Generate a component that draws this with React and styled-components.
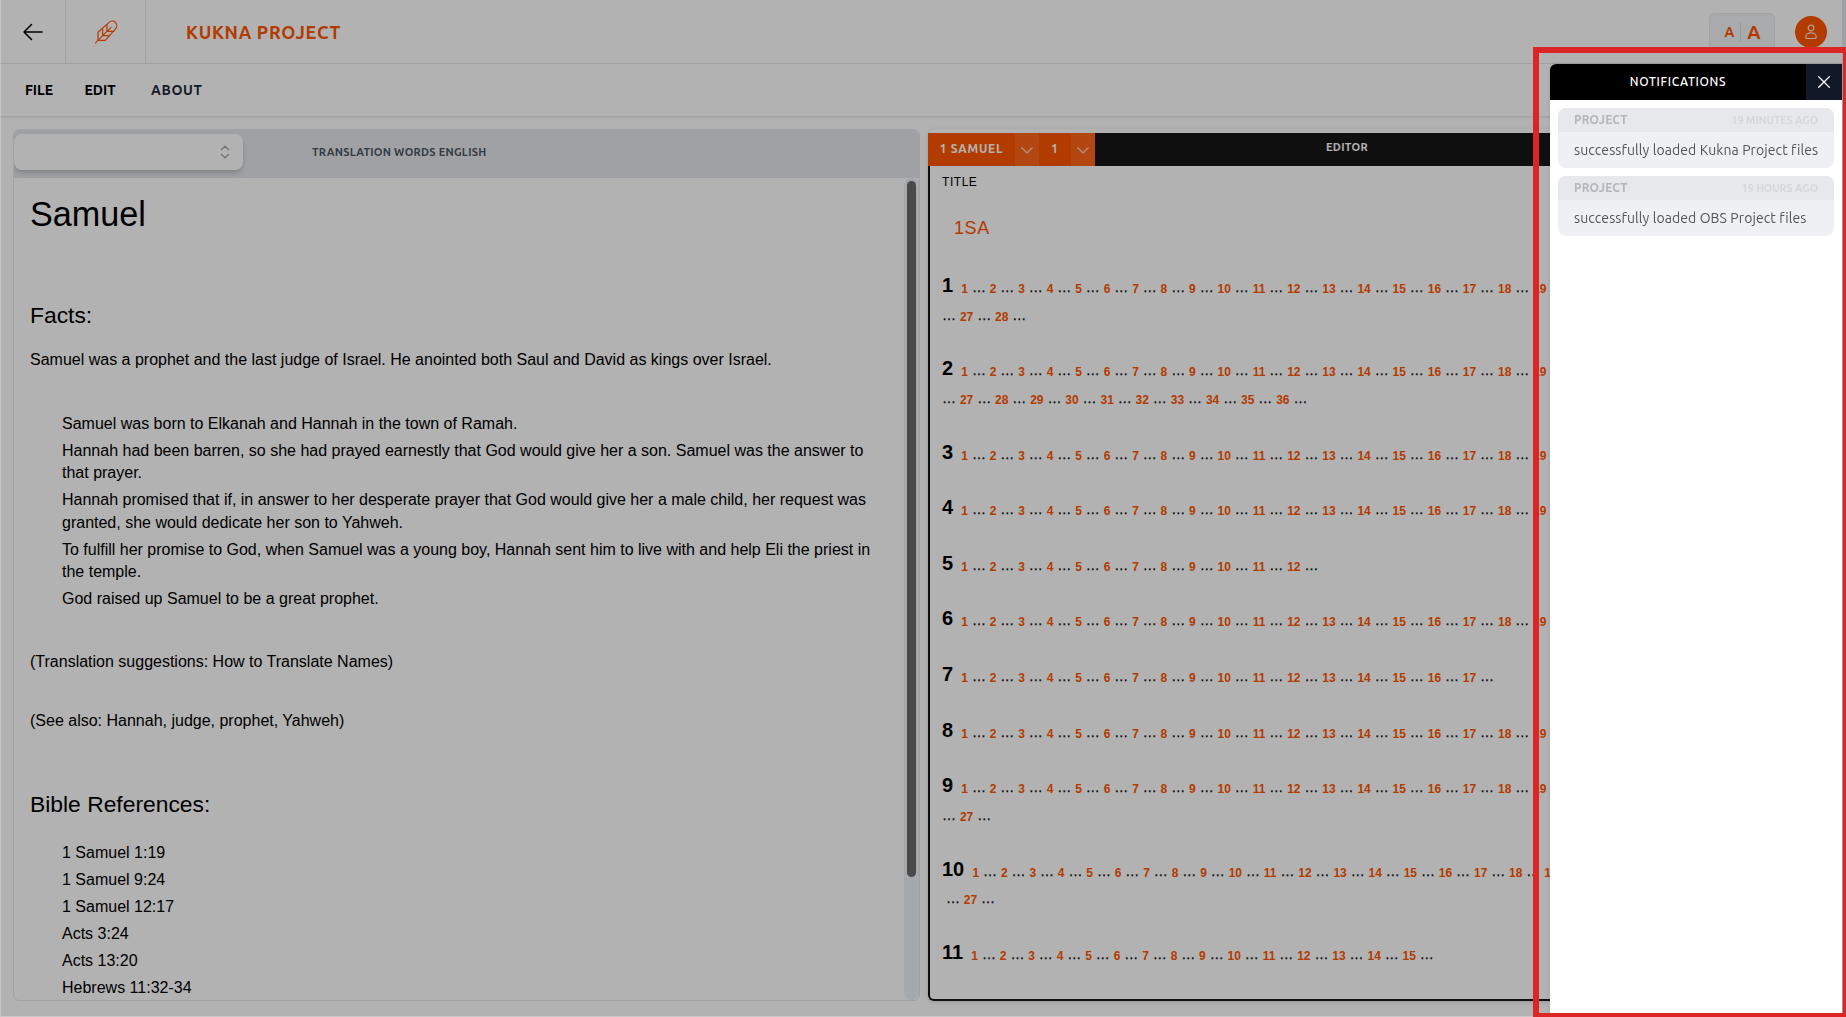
import React from "react";
import styled, { createGlobalStyle } from "styled-components";

const ui = `"Ubuntu", "Noto Sans", "Open Sans", sans-serif`;
const doc = `"Liberation Sans", Arial, sans-serif`;
const orange = "#ff5500";
const line = "#e5e7eb";

const GlobalStyle = createGlobalStyle`
  * { box-sizing: border-box; }
  html, body { margin: 0; padding: 0; overflow: hidden; }
  body { font-family: ${ui}; color: #000; background: #fff; }
  h1, h2, p, ul { margin: 0; padding: 0; font-weight: 400; }
  svg { display: block; }
`;

const Page = styled.div`
  width: 1846px;
  height: 1017px;
  display: flex;
  flex-direction: column;
  overflow: hidden;
  border-right: 4px solid ${line};
`;

const TopBar = styled.header`
  height: 64px;
  flex: none;
  display: flex;
  align-items: stretch;
  border-bottom: 1px solid ${line};
`;

const IconCell = styled.div`
  width: ${(p) => p.$width}px;
  display: flex;
  align-items: center;
  justify-content: center;
  border-right: 1px solid ${line};
`;

const ProjectName = styled.div`
  display: flex;
  align-items: center;
  margin-left: 40px;
  color: ${orange};
  font-size: 18px;
  font-weight: 700;
  letter-spacing: 0.66px;
`;

const TopTools = styled.div`
  margin-left: auto;
  padding: 0 15px 0 0;
  display: flex;
  align-items: center;
  gap: 20px;
`;

const FontSizer = styled.div`
  width: 66px;
  height: 38px;
  display: flex;
  align-items: center;
  justify-content: center;
  gap: 6px;
  padding-left: 1px;
  border: 1px solid ${line};
  border-radius: 6px;
  background: #f3f4f6;
  color: ${orange};
  font-weight: 700;
`;

const SizeLetter = styled.span`
  font-size: ${(p) => p.$size}px;
  line-height: 20px;
`;

const SizeDivider = styled.span`
  width: 1px;
  height: 20px;
  background: #dcdee2;
`;

const Avatar = styled.div`
  width: 32px;
  height: 32px;
  border-radius: 50%;
  background: ${orange};
  display: flex;
  align-items: center;
  justify-content: center;
`;

const MenuBar = styled.nav`
  height: 53px;
  flex: none;
  display: flex;
  align-items: center;
  padding: 0 0 1px 25px;
  border-bottom: 1px solid ${line};
  box-shadow: 0 1px 2px rgba(0, 0, 0, 0.08);
  font-size: 14px;
  font-weight: 600;
`;

const MenuItem = styled.span`
  width: ${(p) => p.$width}px;
  letter-spacing: ${(p) => p.$track || 0}px;
  color: ${(p) => p.$color || "#000"};
`;

const Workspace = styled.main`
  flex: 1;
  min-height: 0;
  display: flex;
  gap: 8px;
  padding: 12px 6px 16px 13px;
`;

const ResourcePanel = styled.section`
  width: 907px;
  flex: none;
  display: flex;
  flex-direction: column;
  border: 1px solid ${line};
  border-radius: 6px;
  overflow: hidden;
`;

const ResourceHead = styled.div`
  height: 48px;
  flex: none;
  display: flex;
  align-items: center;
  background: ${line};
`;

const Picker = styled.div`
  width: 229px;
  height: 36px;
  margin-top: -4px;
  padding-right: 10px;
  display: flex;
  align-items: center;
  justify-content: flex-end;
  background: #fff;
  border-radius: 8px;
  box-shadow: 0 4px 6px -1px rgba(0, 0, 0, 0.15), 0 2px 4px -1px rgba(0, 0, 0, 0.1);
`;

const ResourceTitle = styled.span`
  margin-left: 69px;
  margin-top: -4px;
  font-size: 11px;
  font-weight: 700;
  letter-spacing: 0.26px;
  color: #4b5563;
`;

const ResourceBody = styled.div`
  flex: 1;
  min-height: 0;
  display: flex;
`;

const Article = styled.article`
  flex: 1;
  min-width: 0;
  padding: 16px 19px 0 16px;
  overflow: hidden;
  font-family: ${doc};
  font-size: 16px;
  line-height: 22.4px;
`;

const Heading = styled.h1`
  font-size: 34.2px;
  line-height: 40px;
`;

const SubHeading = styled.h2`
  margin-top: ${(p) => p.$top}px;
  font-size: 22.85px;
  line-height: 28px;
`;

const Para = styled.p`
  margin-top: ${(p) => p.$top}px;
`;

const List = styled.ul`
  list-style: none;
  margin-top: ${(p) => p.$top}px;
  padding-left: 32px;
  display: flex;
  flex-direction: column;
  gap: 4.6px;
`;

const ScrollTrack = styled.div`
  width: 15px;
  padding: 3px;
  border-radius: 8px;
  background: #edf2f7;
`;

const ScrollThumb = styled.div`
  width: 9px;
  height: 696px;
  border-radius: 5px;
  background: #6b6b6b;
`;

const EditorPanel = styled.section`
  flex: 1;
  min-width: 0;
  display: flex;
  flex-direction: column;
  padding-top: 4px;
  border-radius: 6px;
  box-shadow: 0 1px 4px rgba(0, 0, 0, 0.15);
`;

const EditorHead = styled.div`
  height: 33px;
  flex: none;
  display: flex;
  background: #161616;
  color: #fff;
  font-weight: 700;
`;

const BookCell = styled.div`
  width: ${(p) => p.$width}px;
  display: flex;
  align-items: center;
  justify-content: center;
  padding-bottom: 2px;
  background: ${orange};
  font-size: 12px;
  letter-spacing: 0.75px;
`;

const ArrowCell = styled.div`
  width: 24px;
  display: flex;
  align-items: center;
  justify-content: center;
  background: #ff661a;
`;

const EditorTitle = styled.div`
  margin-left: 231px;
  line-height: 28px;
  font-size: 11px;
  letter-spacing: 0.3px;
`;

const EditorBody = styled.div`
  flex: 1;
  min-height: 0;
  overflow: hidden;
  padding-left: 12px;
  border: solid #161616;
  border-width: 0 2px 2px;
  border-radius: 0 0 6px 6px;
  font-family: ${doc};
  font-size: 14px;
  line-height: 27.75px;
  white-space: nowrap;
`;

const FieldLabel = styled.div`
  padding-top: 7px;
  font-size: 12px;
  line-height: 18px;
  letter-spacing: 0.55px;
`;

const BookCode = styled.div`
  margin: 24px 0 33px 12px;
  font-size: 18px;
  line-height: 26px;
  letter-spacing: 0.6px;
  color: ${orange};
`;

const Chapter = styled.p`
  margin-bottom: 27.85px;
`;

const ChapterNumber = styled.b`
  margin-right: 8.2px;
  font-size: 20px;
  line-height: 0;
`;

const VerseNumber = styled.b`
  font-size: 12px;
  line-height: 0;
  vertical-align: -1px;
  color: ${orange};
`;

const Gap = styled.span`
  -webkit-text-stroke: 0.25px #000;
`;

const Backdrop = styled.div`
  position: fixed;
  inset: 0 0 1px 1px;
  background: rgba(0, 0, 0, 0.3);
`;

const EdgeShade = styled.div`
  position: fixed;
  inset: 0;
  border: solid rgba(0, 0, 0, 0.22);
  border-width: 0 0 1px 1px;
`;

const Drawer = styled.aside`
  position: fixed;
  top: 64px;
  right: 4px;
  bottom: 0;
  width: 292px;
  background: #fff;
  border-top-left-radius: 6px;
  overflow: hidden;
  box-shadow: 0 0 4px rgba(0, 0, 0, 0.12);
`;

const DrawerHead = styled.div`
  height: 36px;
  display: flex;
  background: #000;
  color: #fff;
`;

const DrawerTitle = styled.div`
  flex: 1;
  text-align: center;
  font-size: 12px;
  font-weight: 500;
  line-height: 35px;
  letter-spacing: 0.65px;
`;

const CloseButton = styled.div`
  width: 36px;
  display: flex;
  align-items: center;
  justify-content: center;
  background: #111827;
`;

const Notices = styled.div`
  padding: 8px;
  display: flex;
  flex-direction: column;
  gap: 8px;
`;

const Notice = styled.div`
  height: 60px;
  border-radius: 8px;
  overflow: hidden;
  background: #eff0f3;
`;

const NoticeHead = styled.div`
  height: 24px;
  padding: 0 16px;
  display: flex;
  justify-content: space-between;
  background: #e7e8ec;
  font-weight: 700;
  line-height: 24px;
`;

const NoticeKind = styled.span`
  font-size: 12px;
  color: #b4b6bd;
  letter-spacing: 0.1px;
`;

const NoticeTime = styled.span`
  font-size: 10.6px;
  color: #d5d7dc;
`;

const NoticeText = styled.div`
  padding: 0 16px;
  font-size: 14px;
  line-height: 37px;
  letter-spacing: 0.09px;
  color: #545557;
  white-space: nowrap;
`;

const Marker = styled.div`
  position: fixed;
  left: 1533px;
  top: 47px;
  width: 316px;
  height: 972px;
  border: 6px solid #dc2626;
`;

const Chevron = () => (
  <svg width="14" height="14" viewBox="0 0 14 14" fill="none" stroke="#fff" strokeOpacity="0.75" strokeWidth="1.1">
    <path d="M1.5 4.5 7 10l5.5-5.5" />
  </svg>
);

const facts = [
  "Samuel was born to Elkanah and Hannah in the town of Ramah.",
  "Hannah had been barren, so she had prayed earnestly that God would give her a son. Samuel was the answer to that prayer.",
  "Hannah promised that if, in answer to her desperate prayer that God would give her a male child, her request was granted, she would dedicate her son to Yahweh.",
  "To fulfill her promise to God, when Samuel was a young boy, Hannah sent him to live with and help Eli the priest in the temple.",
  "God raised up Samuel to be a great prophet.",
];

const references = ["1 Samuel 1:19", "1 Samuel 9:24", "1 Samuel 12:17", "Acts 3:24", "Acts 13:20", "Hebrews 11:32-34"];

const verseCounts = [28, 36, 21, 22, 12, 21, 17, 22, 27, 27, 15];
const versesPerLine = 26;

const notices = [
  { kind: "PROJECT", time: "19 MINUTES AGO", text: "successfully loaded Kukna Project files" },
  { kind: "PROJECT", time: "19 HOURS AGO", text: "successfully loaded OBS Project files" },
];

function ChapterVerses({ number, count }) {
  const verses = Array.from({ length: count }, (_, i) => i + 1);
  return (
    <Chapter>
      <ChapterNumber>{number}</ChapterNumber>
      {verses.map((v) => {
        const wraps = v === versesPerLine && count > v;
        return (
          <React.Fragment key={v}>
            <VerseNumber>{v}</VerseNumber>
            {wraps && <br />}
            {wraps ? (number === 10 ? "\u00a0" : "") : " "}
            <Gap>…</Gap>{" "}
          </React.Fragment>
        );
      })}
    </Chapter>
  );
}

export default function App() {
  return (
    <>
      <GlobalStyle />
      <Page>
        <TopBar>
          <IconCell $width={66}>
            <svg width="24" height="24" viewBox="0 0 24 24" fill="none" stroke="#000" strokeWidth="1.5" strokeLinecap="round" strokeLinejoin="round">
              <path d="M10.5 19.5 3 12m0 0 7.5-7.5M3 12h18" />
            </svg>
          </IconCell>
          <IconCell $width={80}>
            <svg width="24" height="24" viewBox="0 0 24 24" fill="none" stroke={orange} strokeWidth="1.2" strokeLinecap="round" strokeLinejoin="round">
              <path d="M1.500 22.800 17 7.300M4 20.300v-8L14.800 2.600c2-1.800 4.900-1.900 6.700-.1s1.600 4.700-.2 6.700L11.300 20.300H4M8.600 8.500v7.200h7M13 4.500v6.800h7" />
            </svg>
          </IconCell>
          <ProjectName>KUKNA PROJECT</ProjectName>
          <TopTools>
            <FontSizer>
              <SizeLetter $size={14}>A</SizeLetter>
              <SizeDivider />
              <SizeLetter $size={19}>A</SizeLetter>
            </FontSizer>
            <Avatar>
              <svg width="14" height="16" viewBox="0 0 14 16" fill="none" stroke="#fff" strokeOpacity="0.85" strokeWidth="1.2">
                <circle cx="7" cy="4" r="2.800" />
                <path d="M7 8.800c-3 0-5.200 1.800-5.200 3.900 0 1.200.8 1.800 2 1.800h6.400c1.200 0 2-.6 2-1.800 0-2.100-2.200-3.900-5.200-3.900Z" />
              </svg>
            </Avatar>
          </TopTools>
        </TopBar>
        <MenuBar>
          <MenuItem $width={59.5}>FILE</MenuItem>
          <MenuItem $width={66.5}>EDIT</MenuItem>
          <MenuItem $width={80} $track={0.65} $color="#1f2937">ABOUT</MenuItem>
        </MenuBar>
        <Workspace>
          <ResourcePanel>
            <ResourceHead>
              <Picker>
                <svg width="16" height="16" viewBox="0 0 16 16" fill="none" stroke="#9ca3af" strokeWidth="1.300" strokeLinecap="round" strokeLinejoin="round">
                  <path d="M4.500 5.500 8 2.300l3.500 3.200M4.500 10.500 8 13.700l3.500-3.200" />
                </svg>
              </Picker>
              <ResourceTitle>TRANSLATION WORDS ENGLISH</ResourceTitle>
            </ResourceHead>
            <ResourceBody>
              <Article>
                <Heading>Samuel</Heading>
                <SubHeading $top={67}>Facts:</SubHeading>
                <Para $top={20}>
                  Samuel was a prophet and the last judge of Israel. He anointed both Saul and David as kings over Israel.
                </Para>
                <List $top={41.600}>
                  {facts.map((f) => (
                    <li key={f}>{f}</li>
                  ))}
                </List>
                <Para $top={40.400}>(Translation suggestions: How to Translate Names)</Para>
                <Para $top={36.600}>(See also: Hannah, judge, prophet, Yahweh)</Para>
                <SubHeading $top={57.700}>Bible References:</SubHeading>
                <List $top={24}>
                  {references.map((r) => (
                    <li key={r}>{r}</li>
                  ))}
                </List>
              </Article>
              <ScrollTrack>
                <ScrollThumb />
              </ScrollTrack>
            </ResourceBody>
          </ResourcePanel>
          <EditorPanel>
            <EditorHead>
              <BookCell $width={87}>1 SAMUEL</BookCell>
              <ArrowCell>
                <Chevron />
              </ArrowCell>
              <BookCell $width={32}>1</BookCell>
              <ArrowCell>
                <Chevron />
              </ArrowCell>
              <EditorTitle>EDITOR</EditorTitle>
            </EditorHead>
            <EditorBody>
              <FieldLabel>TITLE</FieldLabel>
              <BookCode>1SA</BookCode>
              {verseCounts.map((count, i) => (
                <ChapterVerses key={i} number={i + 1} count={count} />
              ))}
            </EditorBody>
          </EditorPanel>
        </Workspace>
      </Page>
      <Backdrop />
      <EdgeShade />
      <Drawer>
        <DrawerHead>
          <DrawerTitle>NOTIFICATIONS</DrawerTitle>
          <CloseButton>
            <svg width="14" height="14" viewBox="0 0 14 14" stroke="#fff" strokeWidth="1.300" strokeLinecap="round">
              <path d="M1.700 1.700 12.300 12.300M12.300 1.700 1.700 12.300" />
            </svg>
          </CloseButton>
        </DrawerHead>
        <Notices>
          {notices.map((n) => (
            <Notice key={n.time}>
              <NoticeHead>
                <NoticeKind>{n.kind}</NoticeKind>
                <NoticeTime>{n.time}</NoticeTime>
              </NoticeHead>
              <NoticeText>{n.text}</NoticeText>
            </Notice>
          ))}
        </Notices>
      </Drawer>
      <Marker />
    </>
  );
}
